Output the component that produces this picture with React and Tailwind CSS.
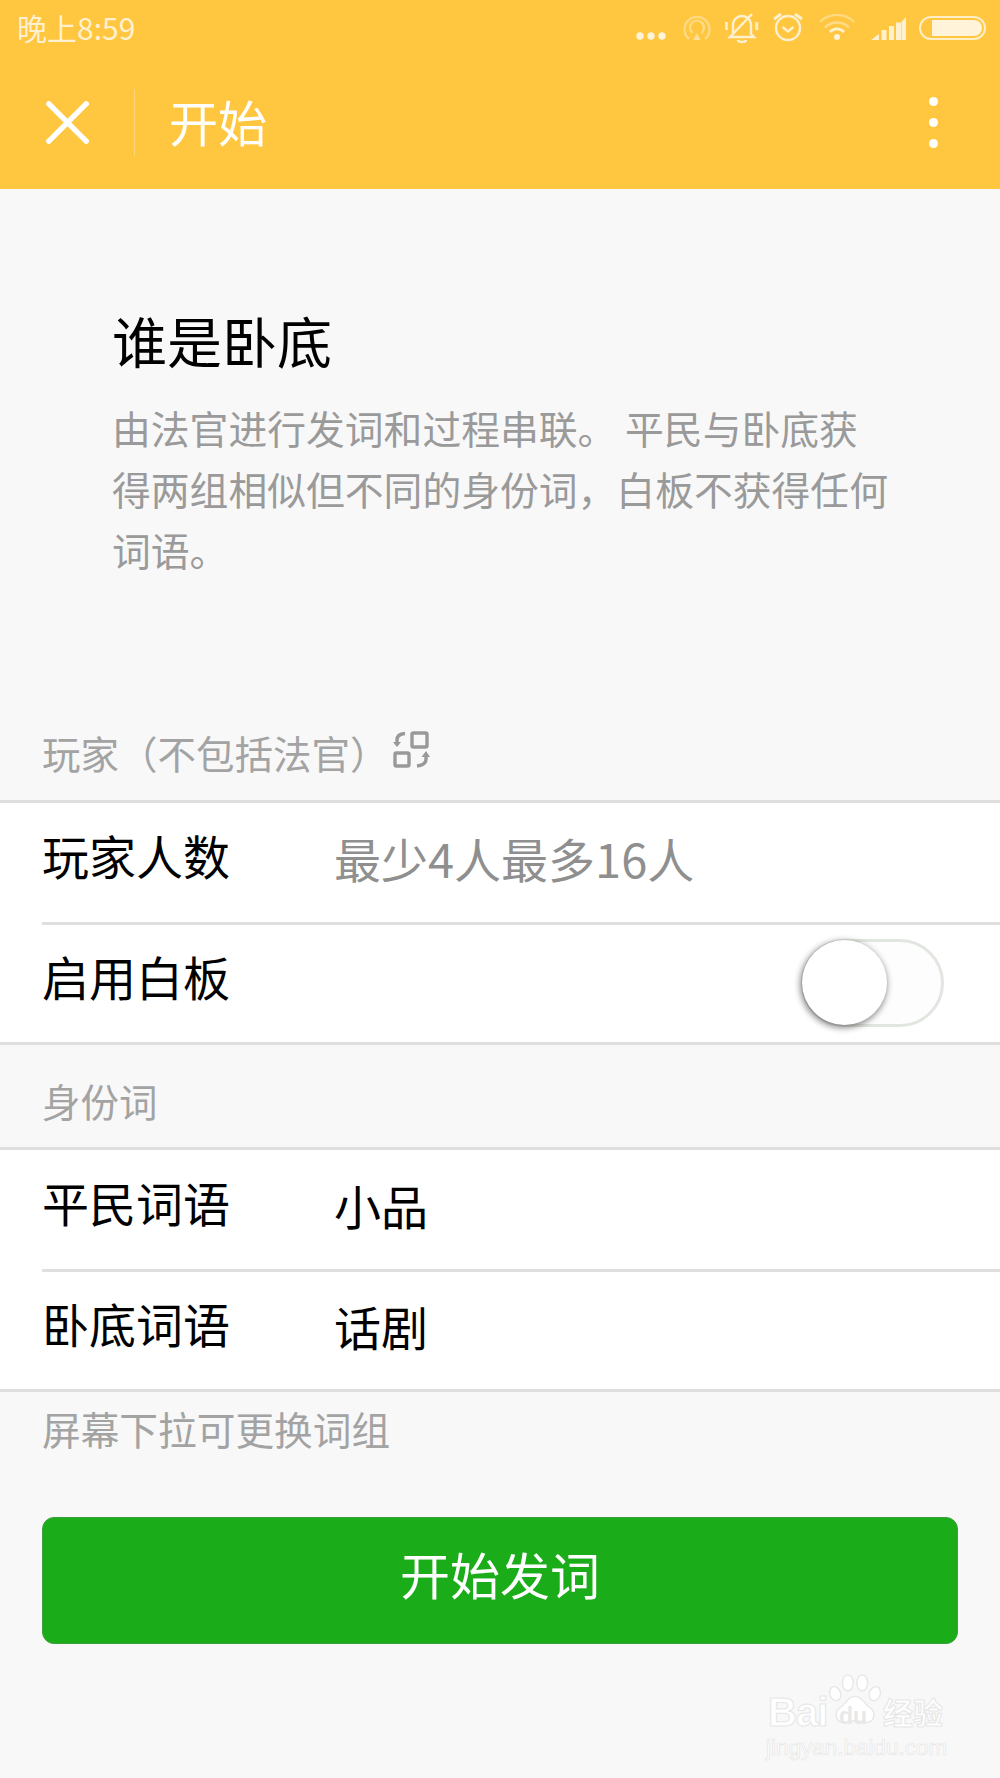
const cjk = { fontFamily: '"Noto Sans CJK SC", "Noto Sans", sans-serif' };

function StatusIcons() {
  return (
    <div className="flex items-center absolute left-[630px] top-[12px]">
      <svg width="370" height="32" viewBox="630 12 370 32" fill="none" stroke="#fff">
        <g fill="#fff" stroke="none" opacity="0.8">
          <circle cx="640" cy="36" r="3.7" /><circle cx="651" cy="36" r="3.7" /><circle cx="662" cy="36" r="3.7" />
        </g>
        <g opacity="0.35" strokeWidth="2.4">
          <path d="M689 39 A12.5 12.5 0 1 1 705 39" />
          <path d="M692.5 33 A7 7 0 1 1 701.5 33" />
        </g>
        <path d="M693 40 L697 33 L700.5 40 Z" fill="#fff" stroke="none" opacity="0.45" />
        <g opacity="0.75" strokeWidth="2.4">
          <path d="M733 34 L733 26 A9 9 0 0 1 751 24 L751 34 L754 37 L730 37 Z" />
          <path d="M727 22 V30 M756 22 V30 M757.5 22 V30 M726 22 V30" strokeWidth="1.4" />
          <path d="M729 38 L752 14" />
          <path d="M738 40 A4 2 0 0 0 746 40" />
        </g>
        <g opacity="0.75" strokeWidth="2.4">
          <circle cx="788" cy="28" r="12" />
          <path d="M782.5 27 L788 31.5 L793.5 27" />
          <path d="M774 19 L781 14 M795 14 L802 19" strokeWidth="2.8" />
        </g>
        <g opacity="0.35" strokeWidth="2.2">
          <path d="M820 22 A24 24 0 0 1 854 22" />
        </g>
        <g opacity="0.75" strokeWidth="2.6">
          <path d="M825 27.5 A17 17 0 0 1 849 27.5" opacity="0.5" />
          <path d="M830 32 A9.5 9.5 0 0 1 844 32" />
        </g>
        <circle cx="837" cy="37" r="3" fill="#fff" stroke="none" opacity="0.8" />
        <g fill="#fff" stroke="none" opacity="0.75">
          <path d="M871 40 L879 34 V40 Z" />
          <rect x="881.5" y="30" width="5" height="10" />
          <rect x="889" y="26" width="5" height="14" />
          <rect x="896" y="22.5" width="5" height="17.5" />
          <path d="M901 22 L905.5 17 V40 H901 Z" transform="translate(0.5 0)" />
        </g>
        <rect x="920" y="17" width="65" height="22" rx="11" strokeWidth="2" opacity="0.7" />
        <path d="M932 20 H974 A8 8 0 0 1 974 36 H932 Z" fill="#fff" stroke="none" opacity="0.8" />
      </svg>
    </div>
  );
}

function Row({ label, value, muted, top, children }) {
  return (
    <div className={`bg-white pl-[42px] ${top ? "border-t-[3px] border-[#dfdfdf] h-[122px]" : "h-[120px]"}`}>
      <div className={`flex items-center h-full pr-[56px] ${top ? "" : "border-t-[3px] border-[#dfdfdf]"}`}>
        <span className="w-[292px] text-[47px] leading-[60px] text-black -mt-[16px]">{label}</span>
        {value && <span className={`text-[47px] leading-[60px] -mt-[10px] ${muted ? "text-[#8f8f8f]" : "text-black"}`}>{value}</span>}
        {children}
      </div>
    </div>
  );
}

export default function App() {
  return (
    <div className="relative w-[1000px] h-[1778px] overflow-hidden bg-[#f8f8f8]" style={cjk}>
      <header className="relative h-[189px] bg-[#ffc640]">
        <div className="h-[56px] pl-[17px] pt-[7px] text-[30px] leading-[40px] text-white/75">晚上8:59</div>
        <StatusIcons />
        <div className="flex items-center h-[67px] mt-[33px] pl-[46px] pr-[62px]">
          <svg width="43" height="43" viewBox="0 0 44 44" stroke="#fff" strokeWidth="5.5">
            <path d="M1 1 L43 43 M43 1 L1 43" />
          </svg>
          <div className="w-px h-[67px] ml-[45px] bg-white/30" />
          <span className="ml-[34px] -mt-[4px] text-[49px] leading-[60px] text-white">开始</span>
          <div className="ml-auto flex flex-col gap-[12px]">
            <span className="block w-[9px] h-[9px] rounded-full bg-white" />
            <span className="block w-[9px] h-[9px] rounded-full bg-white" />
            <span className="block w-[9px] h-[9px] rounded-full bg-white" />
          </div>
        </div>
      </header>

      <section className="h-[523px] pt-[114px] pl-[112px] pr-[100px]">
        <h1 className="text-[55px] leading-[72px] text-black">谁是卧底</h1>
        <p className="mt-[22px] text-[38.8px] leading-[61px] text-[#9a9a9a]">
          由法官进行发词和过程串联。 平民与卧底获<br />得两组相似但不同的身份词，白板不获得任何<br />词语。
        </p>
      </section>

      <div className="flex items-center h-[88px] pl-[42px] pb-[8px] text-[38.5px] leading-[50px] text-[#a3a3a3]">
        <span>玩家（不包括法官）</span>
        <svg className="ml-[3px] -mt-[4px]" width="38" height="40" viewBox="0 0 38 40" fill="none" stroke="#999" strokeWidth="3.4">
          <rect x="20" y="3" width="15" height="14" rx="1.5" />
          <rect x="3" y="23" width="14" height="13" rx="1.5" />
          <path d="M5 15 V10 Q5 4 13 3.5" />
          <path d="M1 12 L5 17 L9 12" fill="#999" stroke="none" />
          <path d="M34 25 V29 Q34 35 25 36" />
          <path d="M29.5 27 L34 21 L38 27" fill="#999" stroke="none" />
        </svg>
      </div>

      <Row top label="玩家人数" value="最少4人最多16人" muted />
      <Row label="启用白板">
        <div className="relative ml-auto -mt-[1px] w-[143px] h-[88px] rounded-full bg-[#fdfdfd] border-[3px] border-[#e2e6e0]">
          <div className="absolute -left-[2px] -top-[2px] w-[85px] h-[85px] rounded-full bg-white shadow-[-1px_2px_6px_1px_rgba(0,0,0,0.45)]" />
        </div>
      </Row>

      <div className="flex items-center h-[105px] pl-[42px] pt-[8px] border-t-[3px] border-[#dfdfdf] text-[38.5px] leading-[50px] text-[#a3a3a3]">身份词</div>

      <Row top label="平民词语" value="小品" />
      <Row label="卧底词语" value="话剧" />

      <div className="flex items-center h-[78px] pl-[42px] pb-[4px] border-t-[3px] border-[#dfdfdf] text-[38.7px] leading-[50px] text-[#a3a3a3]">屏幕下拉可更换词组</div>

      <div className="px-[42px] mt-[50px]">
        <button className="w-full h-[127px] pb-[16px] rounded-[12px] bg-[#1aad19] border border-[#3d9f3c] text-[50px] leading-[60px] text-white">开始发词</button>
      </div>

      <div className="absolute left-[766px] top-[1668px] w-[190px] h-[100px] pointer-events-none">
        <svg className="absolute left-[62px] top-[3px]" width="54" height="58" viewBox="0 0 60 60" fill="#ffffff" stroke="#e6e6e6" strokeWidth="1.5">
          <ellipse cx="8" cy="23" rx="6" ry="8" transform="rotate(-20 8 23)" />
          <ellipse cx="22" cy="11" rx="6" ry="9" />
          <ellipse cx="38" cy="11" rx="6" ry="9" />
          <ellipse cx="52" cy="23" rx="6" ry="8" transform="rotate(20 52 23)" />
          <path d="M30 26 C22 26 20 34 14 38 C6 43 8 55 18 55 C24 55 26 53 30 53 C34 53 37 55 42 55 C52 55 54 43 46 38 C40 34 38 26 30 26 Z" />
        </svg>
        <span className="absolute left-[2px] top-[20px] text-[40px] leading-[48px] font-bold tracking-[-1px] text-white [-webkit-text-stroke:1px_#e6e6e6]" style={{ fontFamily: '"Liberation Sans", sans-serif' }}>Bai</span>
        <span className="absolute left-[73px] top-[35px] text-[23px] leading-[26px] font-bold text-[#e8e8e8]" style={{ fontFamily: '"Liberation Sans", sans-serif' }}>du</span>
        <span className="absolute left-[117px] top-[21px] text-[30px] leading-[44px] font-bold text-white [-webkit-text-stroke:1px_#e6e6e6]">经验</span>
        <span className="absolute left-0 top-[67px] text-[22.5px] leading-[26px] text-white [-webkit-text-stroke:0.7px_#e6e6e6]" style={{ fontFamily: '"Liberation Sans", sans-serif' }}>jingyan.baidu.com</span>
      </div>
    </div>
  );
}
